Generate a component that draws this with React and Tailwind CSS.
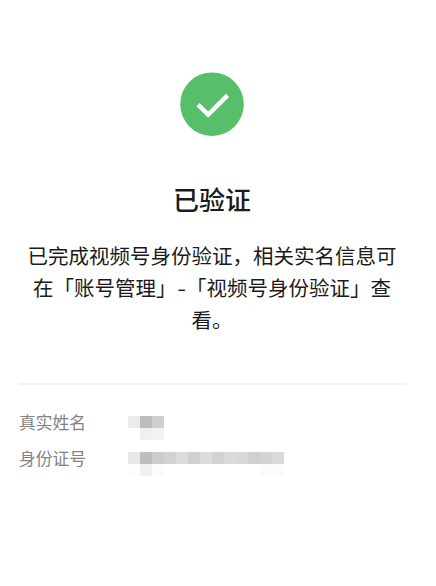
const topCells = ['bg-[#ebebeb]', 'bg-[#bdbdbd]', 'bg-[#cfcfcf]'];
const idCells = [
  'bg-[#e8e8e8]', 'bg-[#bdbdbd]', 'bg-[#cdcdcd]', 'bg-[#d2d2d2]', 'bg-[#dcdcdc]',
  'bg-[#d0d0d0]', 'bg-[#dcdcdc]', 'bg-[#d2d2d2]', 'bg-[#dadada]', 'bg-[#d8d8d8]',
  'bg-[#d0d0d0]', 'bg-[#d4d4d4]', 'bg-[#d9d9d9]',
];
const nameShade = ['bg-white', 'bg-[#f0f0f0]', 'bg-[#f2f2f2]'];
const idShade = [
  'bg-[#fdfdfd]', 'bg-[#f1f1f1]', 'bg-[#fbfbfb]', 'bg-white', 'bg-white', 'bg-white',
  'bg-white', 'bg-white', 'bg-white', 'bg-white', 'bg-white', 'bg-[#fbfbfb]', 'bg-[#fbfbfb]',
];

function Cells({ colors }) {
  return (
    <div className="flex">
      {colors.map((c, i) => (
        <span key={i} className={'block size-3 ' + c} />
      ))}
    </div>
  );
}

function Row({ label, cells, shade }) {
  return (
    <div className="flex h-9 items-start">
      <dt className="w-[109px] text-[16.8px] leading-6 text-[#838383]">{label}</dt>
      <dd className="pt-[6px]">
        <Cells colors={cells} />
        <Cells colors={shade} />
      </dd>
    </div>
  );
}

export default function App() {
  return (
    <main className="flex h-[586px] w-[436px] flex-col bg-white pt-[72px] font-['Noto_Sans_CJK_SC',sans-serif]">
      <div className="flex w-[424px] flex-col items-center">
        <svg className="size-16" viewBox="0 0 64 64" fill="none">
          <circle cx="32" cy="32.2" r="31.8" fill="#57be6a" />
          <path
            d="M18 32.6 L28.2 42.6 L47.6 23.4"
            stroke="white"
            strokeWidth="4.4"
          />
        </svg>
        <h1 className="mt-[43px] text-[26px] font-medium leading-10 text-[#1b1b1b]">已验证</h1>
        <p className="mt-5 text-center text-[20.5px] leading-8 whitespace-nowrap text-[#1b1b1b]">
          已完成视频号身份验证，相关实名信息可
          <br />
          在「账号管理」<span className="inline-block w-[9.5px] scale-x-125">-</span>「视频号身份验证」查
          <br />
          看。
        </p>
      </div>
      <dl className="mt-12 ml-[19px] w-[387px] border-t-2 border-[#f4f4f4] pt-[25px]">
        <Row label="真实姓名" cells={topCells} shade={nameShade} />
        <Row label="身份证号" cells={idCells} shade={idShade} />
      </dl>
    </main>
  );
}
